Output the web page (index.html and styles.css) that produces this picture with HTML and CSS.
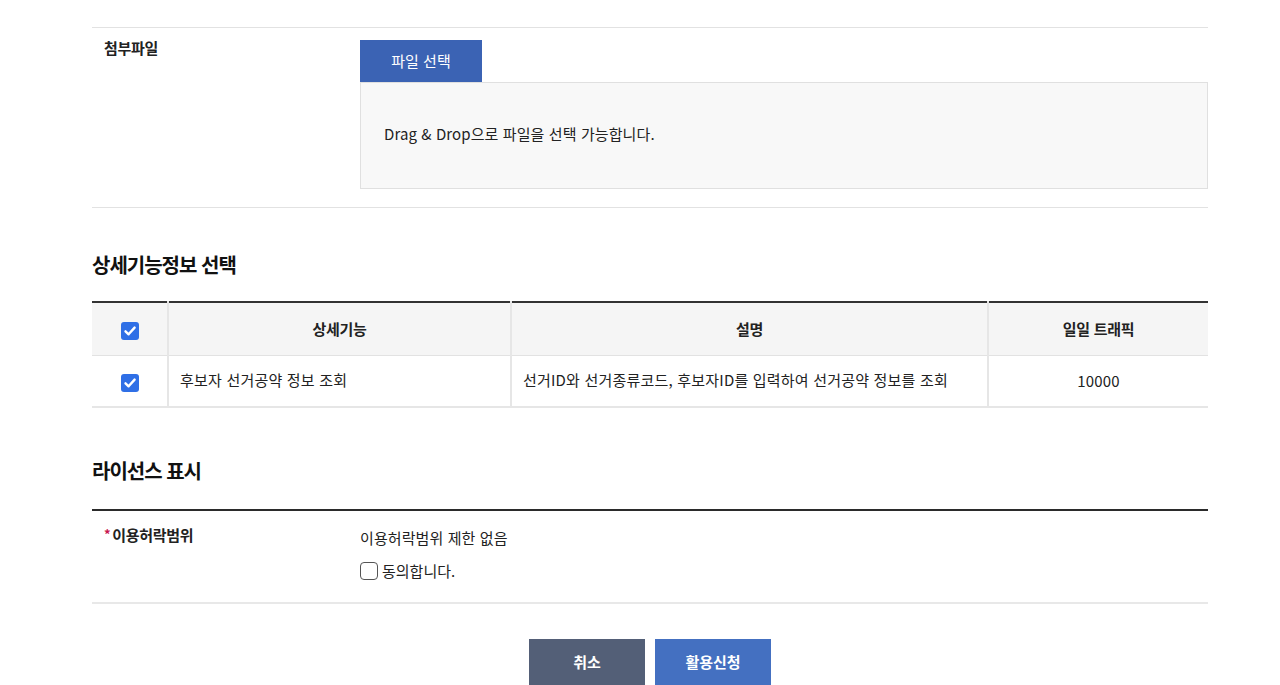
FILE: index.html
```html
<!DOCTYPE html>
<html lang="ko">
<head>
<meta charset="utf-8">
<title>활용신청</title>
<link rel="stylesheet" href="styles.css">
</head>
<body>
<main class="wrap">
  <div class="top-cut"></div>

  <div class="form-row file-row">
    <div class="label">첨부파일</div>
    <div class="field">
      <button class="btn-file" type="button">파일 선택</button>
      <div class="drop">Drag &amp; Drop으로 파일을 선택 가능합니다.</div>
    </div>
  </div>

  <h2 class="sec-title first">상세기능정보 선택</h2>
  <table class="grid">
    <colgroup>
      <col class="c1"><col class="c2"><col class="c3"><col class="c4">
    </colgroup>
    <thead>
      <tr>
        <th><span class="cb on"><svg viewBox="0 0 18 18" width="18" height="18"><path d="M4.5 9.3 L7.6 12.3 L13.6 5.6" fill="none" stroke="#fff" stroke-width="2.4" stroke-linecap="round" stroke-linejoin="round"/></svg></span></th>
        <th>상세기능</th>
        <th>설명</th>
        <th>일일 트래픽</th>
      </tr>
    </thead>
    <tbody>
      <tr>
        <td class="center"><span class="cb on"><svg viewBox="0 0 18 18" width="18" height="18"><path d="M4.5 9.3 L7.6 12.3 L13.6 5.6" fill="none" stroke="#fff" stroke-width="2.4" stroke-linecap="round" stroke-linejoin="round"/></svg></span></td>
        <td>후보자 선거공약 정보 조회</td>
        <td>선거ID와 선거종류코드, 후보자ID를 입력하여 선거공약 정보를 조회</td>
        <td class="center">10000</td>
      </tr>
    </tbody>
  </table>

  <h2 class="sec-title second">라이선스 표시</h2>
  <div class="form-row license-row">
    <div class="label"><span class="req">*</span>이용허락범위</div>
    <div class="field">
      <p class="lic-text">이용허락범위 제한 없음</p>
      <label class="agree"><span class="cb off"></span>동의합니다.</label>
    </div>
  </div>

  <div class="actions">
    <button class="btn cancel" type="button">취소</button>
    <button class="btn apply" type="button">활용신청</button>
  </div>
</main>
</body>
</html>
```

FILE: styles.css
```css
* { box-sizing: border-box; }
html, body { margin: 0; padding: 0; background: #fff; }
body {
  font-family: "Noto Sans CJK KR", "Noto Sans", sans-serif;
  color: #222;
  font-size: 15px;
  overflow: hidden;
}
.wrap {
  width: 1116px;
  margin-left: 92px;
}
.top-cut { height: 27px; }

.form-row {
  display: flex;
  border-top: 1px solid #e2e2e2;
}
.form-row .label {
  width: 268px;
  padding-left: 12px;
  font-weight: 700;
  font-size: 15px;
  letter-spacing: -0.3px;
}
.form-row .field { flex: 1; }

.file-row { padding: 12px 0 18px; border-bottom: 1px solid #e2e2e2; }
.file-row .label { margin-top: -3px; line-height: 22px; }
.btn-file {
  display: block;
  width: 122px;
  height: 42px;
  border: 0;
  background: #3b63b4;
  color: #fff;
  font-family: inherit;
  font-size: 15px;
  padding: 0 0 2px;
  margin: 0;
}
.drop {
  height: 107px;
  background: #f8f8f8;
  border: 1px solid #e0e0e0;
  display: flex;
  align-items: center;
  padding: 0 0 4px 23px;
  font-size: 15px;
  color: #222;
  letter-spacing: 0.1px;
}

.sec-title {
  margin: 0;
  font-size: 20px;
  line-height: 28px;
  font-weight: 700;
  letter-spacing: -1px;
  color: #111;
}
.sec-title.first { margin-top: 43px; margin-bottom: 22px; }
.sec-title.second { margin-top: 49px; margin-bottom: 24px; }

.grid {
  width: 100%;
  border-collapse: collapse;
  border-top: 2px solid #333;
  table-layout: fixed;
}
.grid .c1 { width: 76px; }
.grid .c2 { width: 343px; }
.grid .c3 { width: 477px; }
.grid .c4 { width: 220px; }
.grid th {
  height: 53px;
  background: #f5f5f5;
  font-weight: 700;
  font-size: 15px;
  color: #222;
  text-align: center;
  border-left: 2px solid #e6e6e6;
  border-bottom: 1px solid #e2e2e2;
  letter-spacing: -0.3px;
  padding: 0;
}
.grid td {
  height: 52px;
  font-size: 15px;
  border-left: 2px solid #e6e6e6;
  border-bottom: 2px solid #e6e6e6;
  padding: 0 0 3px 11px;
  letter-spacing: 0.2px;
}
.grid th:first-child, .grid td:first-child { border-left: 0; }
.grid td.center { text-align: center; padding: 0; }

.cb {
  display: inline-block;
  width: 18px;
  height: 18px;
  border-radius: 3px;
  vertical-align: middle;
}
.cb svg { display: block; }
.cb.on { background: #2f6fe6; }
.cb.off { border: 1px solid #555; border-radius: 4px; background: #fff; }

.license-row {
  border-top: 2px solid #2b2b2b;
  border-bottom: 2px solid #e8e8e8;
  padding: 12px 0 20px;
}
.license-row .label { line-height: 24px; margin-top: -1px; }
.req { color: #c8164d; font-size: 13px; margin-right: 2px; vertical-align: 2px; }
.lic-text { margin: 3px 0 0; line-height: 24px; letter-spacing: 0.1px; }
.agree {
  display: flex;
  align-items: center;
  gap: 4px;
  margin-top: 10px;
  line-height: 22px;
}

.actions {
  display: flex;
  justify-content: center;
  gap: 10px;
  margin-top: 35px;
}
.btn {
  width: 116px;
  height: 48px;
  border: 0;
  color: #fff;
  font-family: inherit;
  font-size: 15px;
  font-weight: 700;
  padding: 0 0 4px;
}
.btn.cancel { background: #535f77; }
.btn.apply { background: #4470c1; }
```
